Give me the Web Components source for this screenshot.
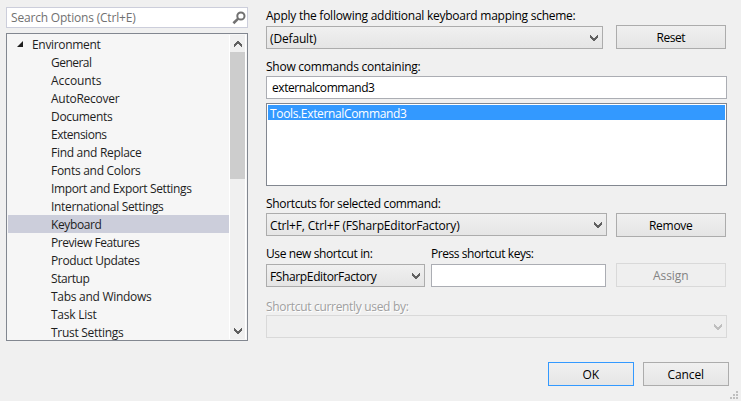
<!DOCTYPE html>
<html lang="en">
<head>
<meta charset="utf-8">
<title>Options</title>
<style>
html,body{margin:0;height:100%;overflow:hidden;background:#f0f0f0}
body{font:12px/16px "Open Sans","Noto Sans",sans-serif;color:#000}
</style>
</head>
<body>
<options-dialog></options-dialog>
<script>
const define=(name,html,setup)=>customElements.define(name,class extends HTMLElement{
  connectedCallback(){
    if(this.shadowRoot)return;
    const t=document.createElement('template');
    t.innerHTML=html;
    this.attachShadow({mode:'open'}).append(t.content.cloneNode(true));
    if(setup)setup(this,this.shadowRoot);
  }
});

// Single-line text, tracked so that it fills the width given by "w".
define('fit-text',`<style>
:host{display:block;white-space:pre;flex:none;height:16px;line-height:18px}
span{display:inline-block}
</style><span><slot></slot></span>`,(el,root)=>{
  const s=root.querySelector('span'),w=+el.getAttribute('w')-.5;
  if(!w)return;
  const n=el.textContent.length;
  s.style.letterSpacing=((w-s.getBoundingClientRect().width)/n)+'px';
  el.style.width=Math.ceil(w)+'px';
});

define('drop-arrow',`<style>
:host{display:block;width:8px;height:6px;color:#606060;flex:none}
:host([up]){transform:scaleY(-1)}
svg{display:block}
</style><svg width="8" height="6" viewBox="0 0 8 6" shape-rendering="crispEdges"><path d="M0 0h1v1h1v1h1v1h2v-1h1v-1h1v-1h1v3h-1v1h-1v1h-1v1h-2v-1h-1v-1h-1v-1h-1z" fill="currentColor"/></svg>`);

define('combo-box',`<style>
:host{display:flex;box-sizing:border-box;height:23px;border:1px solid #acacac;background:linear-gradient(#f0f0f0,#e5e5e5);align-items:center;justify-content:space-between;padding:0 4px 0 3px}
:host([disabled]){border-color:#d9d9d9;background:#efefef}
:host([disabled]) drop-arrow{color:#bfbfbf}
</style><span><slot></slot></span><drop-arrow></drop-arrow>`);

define('push-button',`<style>
:host{display:flex;box-sizing:border-box;width:110px;height:24px;border:1px solid #acacac;background:linear-gradient(#f0f0f0,#e5e5e5);align-items:center;justify-content:center}
:host([small]){width:86px}
:host([default]){border-color:#3399ff}
:host([disabled]){border-color:#d9d9d9;background:#efefef;color:#838383}
</style><slot></slot>`);

define('text-field',`<style>
:host{display:flex;box-sizing:border-box;height:23px;border:1px solid #abadb3;background:#fff;align-items:center;padding:0 5px 2px}
</style><slot></slot>`);

define('search-box',`<style>
:host{display:flex;box-sizing:border-box;height:21px;border:1px solid #cccedb;background:#fff;color:#717171;align-items:center;justify-content:space-between;padding:0 1px 0 4px}
svg{display:block}
fit-text{margin-bottom:2px}
</style><fit-text w="125">Search Options (Ctrl+E)</fit-text>
<svg width="14" height="14" viewBox="0 0 14 14" fill="none" stroke="#717171"><circle cx="8.9" cy="5" r="3.6" stroke-width="2"/><path d="M6.2 7.6L1.4 12.2" stroke-width="2.6"/></svg>`);

define('tree-item',`<style>
:host{display:flex;height:18px;align-items:center;padding-left:43px;color:#1e1e1e}
:host([root]){padding-left:9px}
:host([selected]){background:#cccedb}
svg{display:none;margin-right:9px;flex:none}
:host([root]) svg{display:block}
</style><svg width="6" height="6" viewBox="0 0 6 6"><path d="M6 0V6H0z" fill="#1e1e1e"/></svg><slot></slot>`);

define('scroll-bar',`<style>
:host{display:flex;flex-direction:column;width:15px;flex:none;background:#f0f0f0}
.b{height:17px;display:flex;align-items:center;justify-content:center;width:15px;flex:none}
.t{height:127px;width:15px;background:#cdcdcd}
.g{flex:1}
</style><div class="b"><drop-arrow up></drop-arrow></div><div class="t"></div><div class="g"></div><div class="b"><drop-arrow></drop-arrow></div>`);

define('tree-view',`<style>
:host{display:flex;box-sizing:border-box;height:308px;border:1px solid #828790;background:#f6f6f6;padding:1px 1px 1px;overflow:hidden}
.items{width:221px;flex:none;height:305px;overflow:hidden}
scroll-bar{border-left:1px solid #fff;border-right:1px solid #fff}
</style><div class="items"></div><scroll-bar></scroll-bar>`,(el,root)=>{
  const rows=[['Environment',69],['General',41],['Accounts',51],['AutoRecover',69],['Documents',62],['Extensions',56],['Find and Replace',91],['Fonts and Colors',90],['Import and Export Settings',141],['International Settings',113],['Keyboard',51],['Preview Features',89],['Product Updates',89],['Startup',39],['Tabs and Windows',101],['Task List',46],['Trust Settings',73]];
  root.querySelector('.items').innerHTML=rows.map(([t,w],i)=>`<tree-item${i===0?' root':''}${t==='Keyboard'?' selected':''}><fit-text w="${w}">${t}</fit-text></tree-item>`).join('');
});

define('command-list',`<style>
:host{display:block;box-sizing:border-box;height:83px;border:1px solid #828790;background:#fff;padding:1px}
div{display:flex;align-items:center;height:15px;background:#3399ff;color:#fff;padding-left:2px}
</style><div><slot></slot></div>`);

define('size-grip',`<style>
:host{display:block;position:absolute;right:3px;bottom:2px}
svg{display:block}
</style><svg width="8" height="8" viewBox="0 0 8 8" fill="#bfbfbf"><path d="M6 0h2v2h-2zM3 3h2v2h-2zM6 3h2v2h-2zM0 6h2v2h-2zM3 6h2v2h-2zM6 6h2v2h-2z"/></svg>`);

define('keyboard-page',`<style>
:host{display:flex;flex-direction:column;width:461px}
.row{display:flex;align-items:flex-end}
.row>push-button{margin-left:auto;margin-right:1px}
.labels{display:flex;height:16px}
.c1{width:337px}.c2{width:341px}.c3{width:159px}
.gray{color:#a0a0a0;text-shadow:1px 1px #fff}
</style>
<div class="labels"><fit-text w="310">Apply the following additional keyboard mapping scheme:</fit-text></div>
<div class="row" style="margin-top:2px"><combo-box class="c1"><fit-text w="47">(Default)</fit-text></combo-box><push-button><fit-text w="29">Reset</fit-text></push-button></div>
<div class="labels" style="margin-top:9px"><fit-text w="155">Show commands containing:</fit-text></div>
<text-field style="margin-top:2px"><fit-text w="103">externalcommand3</fit-text></text-field>
<command-list style="margin-top:4px"><fit-text w="137">Tools.ExternalCommand3</fit-text></command-list>
<div class="labels" style="margin-top:9px"><fit-text w="175">Shortcuts for selected command:</fit-text></div>
<div class="row" style="margin-top:2px;align-items:flex-start"><combo-box class="c2"><fit-text w="190">Ctrl+F, Ctrl+F (FSharpEditorFactory)</fit-text></combo-box><push-button><fit-text w="44">Remove</fit-text></push-button></div>
<div class="labels" style="margin-top:8px;gap:58px"><fit-text w="107">Use new shortcut in:</fit-text><fit-text w="103">Press shortcut keys:</fit-text></div>
<div class="row" style="margin-top:2px"><combo-box class="c3"><fit-text w="107">FSharpEditorFactory</fit-text></combo-box><text-field style="width:175px;margin-left:6px"></text-field><push-button disabled><fit-text w="36">Assign</fit-text></push-button></div>
<div class="labels gray" style="margin-top:11px"><fit-text w="143">Shortcut currently used by:</fit-text></div>
<combo-box disabled style="margin-top:1px"></combo-box>`);

define('options-dialog',`<style>
:host{display:flex;flex-direction:column;position:relative;box-sizing:border-box;width:741px;height:401px;padding:7px 12px 0 6px;background:#f0f0f0}
.main{display:flex;gap:18px;height:355px}
nav{display:flex;flex-direction:column;gap:5px;width:242px}
footer{display:flex;justify-content:flex-end;gap:9px}
</style>
<div class="main"><nav><search-box></search-box><tree-view></tree-view></nav><keyboard-page></keyboard-page></div>
<footer><push-button small default><fit-text w="17">OK</fit-text></push-button><push-button small><fit-text w="37">Cancel</fit-text></push-button></footer>
<size-grip></size-grip>`);
</script>
</body>
</html>
